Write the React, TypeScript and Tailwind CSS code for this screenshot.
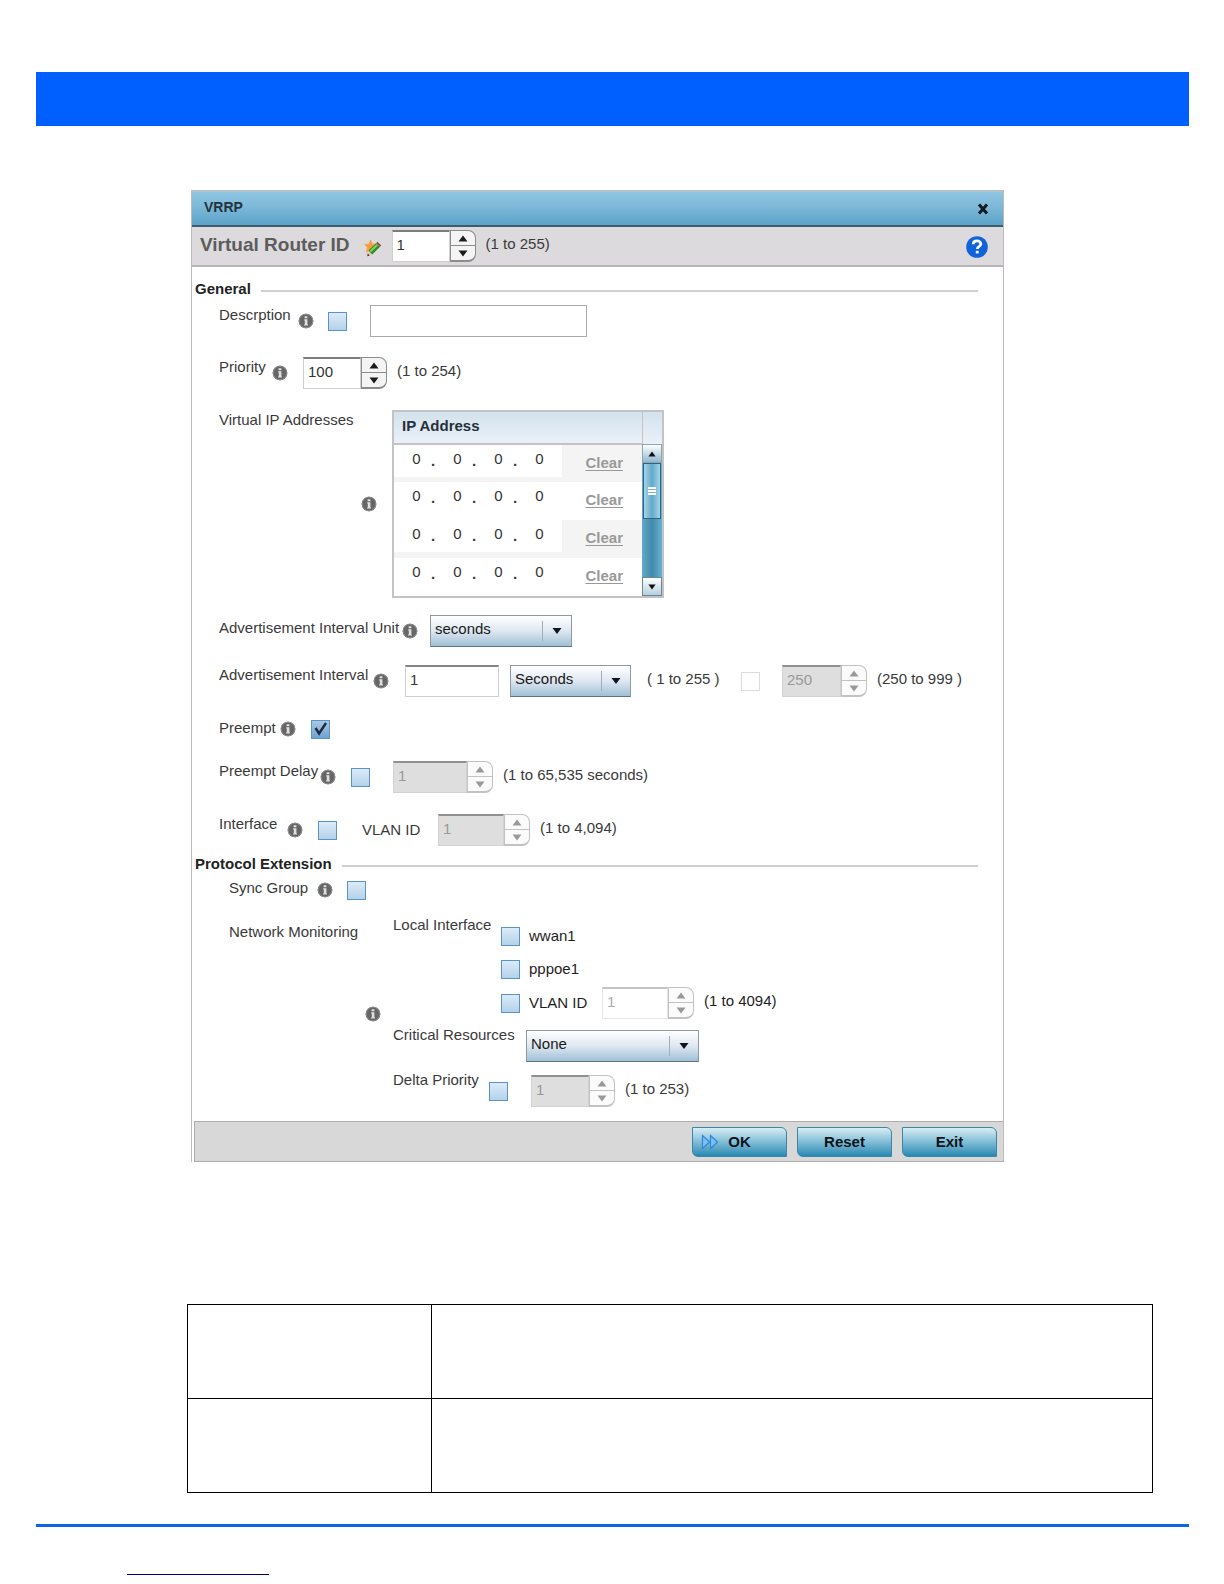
import React, { useId } from "react";

function InfoIcon() {
  return (
    <svg className="size-[16px] shrink-0" viewBox="0 0 16 16" aria-hidden="true">
      <circle cx="8" cy="8" r="7.3" fill="#666" />
      <circle cx="8" cy="8" r="6.9" fill="none" stroke="#909090" strokeWidth="1" />
      <path d="M6.6 3.2h2.8v2H6.6zM6.2 6.2h3.2v5.2h.6v1.2H6v-1.2h.8V7.4h-.6z" fill="#e0e0e0" />
    </svg>
  );
}

function EditIcon() {
  return (
    <svg className="size-[18px] shrink-0" viewBox="0 0 18 18" aria-hidden="true">
      <path
        d="M6.5 1l1.6 4.1 4.6.2-3.5 3 1 4.7-3.9-2.4-3.9 2.6 1-4.7L.6 5.4l4.4-.3z"
        fill="#f79a3a"
        stroke="#f3a858"
        strokeWidth="1"
      />
      <path d="M4.2 11.8l3.6 3.6-4.2 1.6z" fill="#e9c9a0" />
      <path d="M3.7 14.6l2 2-2.4.6z" fill="#3b2a1c" />
      <path d="M4.4 11.6L12 4.2l3.8 3.8-7.6 7.4z" fill="#2f8a28" />
      <path d="M5.6 11.8l7-6.8 1.4 1.4-7 6.8z" fill="#7fd06a" />
      <path d="M12 4.2l1.6-1.5 3.7 3.7L15.8 8z" fill="#8f5a4a" />
    </svg>
  );
}

function Triangle({ up = false, className }: { up?: boolean; className: string }) {
  return (
    <svg className={className} viewBox="0 0 10 7" aria-hidden="true">
      <path d={up ? "M5 0.5l4.5 6h-9z" : "M0.5 0.5h9L5 6.5z"} fill="currentColor" />
    </svg>
  );
}

type Look = "active" | "grey" | "faint";

function Spinner({ value, width, look = "active", label }: { value: string; width: string; look?: Look; label: string }) {
  const field =
    look === "active"
      ? "bg-white border-[#cfcfcf] border-t-[#7c7c7c] text-[#333]"
      : look === "grey"
        ? "bg-[#dedede] border-[#d2d2d2] border-t-[#909090] text-[#999]"
        : "bg-white border-[#e6e6e6] border-t-[#c4c4c4] text-[#aaa]";
  const steps =
    look === "active" ? "border-[#8c8c8c] text-[#1c1c1c] bg-[#f4f4f4]" : "border-[#c2c2c2] text-[#999] bg-[#fbfbfb]";
  const disabled = look !== "active";
  return (
    <div className="flex h-8 shrink-0">
      <input
        aria-label={label}
        defaultValue={value}
        disabled={disabled}
        className={`${width} ${field} h-8 border border-t-2 pb-1 pl-1 text-[15px] outline-none`}
      />
      <div className={`${steps} flex w-[26px] flex-col overflow-hidden rounded-r-lg border border-b-2`}>
        <button type="button" disabled={disabled} aria-label={`Increase ${label}`} className="flex flex-1 items-center justify-center border-b border-inherit">
          <Triangle up className="h-[7px] w-[10px]" />
        </button>
        <button type="button" disabled={disabled} aria-label={`Decrease ${label}`} className="flex flex-1 items-center justify-center">
          <Triangle className="h-[7px] w-[10px]" />
        </button>
      </div>
    </div>
  );
}

function Check({ id, label, checked, faint }: { id?: string; label?: string; checked?: boolean; faint?: boolean }) {
  const box = faint
    ? "border-[#dcdcdc] bg-white"
    : checked
      ? "border-[#5e93c8] bg-linear-to-b from-[#a9c8e4] to-[#6fa3d2]"
      : "border-[#5b93c9] bg-linear-to-b from-[#dcebf8] to-[#b3d2ea]";
  return (
    <span className="relative flex size-[19px] shrink-0">
      <input
        id={id}
        type="checkbox"
        aria-label={label}
        defaultChecked={checked}
        disabled={faint}
        className={`${box} peer size-[19px] appearance-none border`}
      />
      <svg className="pointer-events-none absolute inset-0 hidden size-[19px] peer-checked:block" viewBox="0 0 19 19" aria-hidden="true">
        <path d="M4.5 8l3.6 5.5L15 3" fill="none" stroke="#1d2b3c" strokeWidth="2.4" />
      </svg>
    </span>
  );
}

function Picker({ value, width, label }: { value: string; width: string; label: string }) {
  return (
    <div className={`${width} relative h-8 shrink-0`}>
      <select
        aria-label={label}
        className="h-8 w-full appearance-none border border-[#8e9aa3] border-b-[#5d7482] bg-linear-to-b from-white via-[#dfe7f1] to-[#9fc0d6] pb-1 pl-1 text-[15px] text-[#1a1a1a] outline-none"
      >
        <option>{value}</option>
      </select>
      <span className="pointer-events-none absolute inset-y-0 right-0 flex items-center">
        <span className="h-5 w-px bg-[#a0aebb]" />
        <Triangle className="mr-[10px] ml-[9px] h-[8px] w-[10px] text-[#0d1620]" />
      </span>
    </div>
  );
}

function Label({ children, width, htmlFor }: { children: React.ReactNode; width: string; htmlFor?: string }) {
  return (
    <label htmlFor={htmlFor} className={`${width} shrink-0 pb-3 whitespace-nowrap`}>
      {children}
    </label>
  );
}

function Range({ children }: { children: React.ReactNode }) {
  return <span className="ml-[10px] pb-1 whitespace-nowrap">{children}</span>;
}

function SectionHeading({ children }: { children: React.ReactNode }) {
  return (
    <div className="flex h-5 items-center gap-[10px] pr-[25px] pl-[3px]">
      <h2 className="text-[15px] font-bold text-[#222]">{children}</h2>
      <span className="mt-1 h-[2px] flex-1 bg-[#d0d0d0]" />
    </div>
  );
}

function AddressTable() {
  return (
    <div className="flex w-[272px] shrink-0 border-2 border-[#c3c3c3]">
      <table className="flex-1 border-collapse">
        <thead>
          <tr>
            <th colSpan={2} className="h-8 border-b-2 border-[#c3c3c3] bg-linear-to-b from-[#d3e2ec] to-[#eaf0fa] pb-1 pl-2 text-left text-[15px] font-bold text-[#26303a]">
              IP Address
            </th>
          </tr>
        </thead>
        <tbody>
          {[0, 1, 2, 3].map((row) => (
            <tr key={row} className="odd:bg-[#f4f4f4]">
              <td className="h-[38px] w-[168px] pb-1 align-top">
                <div className="flex h-[32px] items-center bg-white pl-[10px]">
                  {[0, 1, 2, 3].map((octet) => (
                    <React.Fragment key={octet}>
                      <input
                        aria-label={`Address ${row + 1} octet ${octet + 1}`}
                        defaultValue="0"
                        className="w-[25px] bg-transparent pb-1 text-center text-[15px] text-[#333] outline-none"
                      />
                      {octet < 3 && <span className="w-4 pl-[2px] text-[15px] font-bold">.</span>}
                    </React.Fragment>
                  ))}
                </div>
              </td>
              <td className="pr-[19px] pb-[2px] text-right">
                <a href="#clear" className="text-[15px] font-bold text-[#999] underline underline-offset-2">
                  Clear
                </a>
              </td>
            </tr>
          ))}
        </tbody>
      </table>
      <div className="flex w-[20px] flex-col">
        <div className="h-8 border-l border-[#c3c3c3] bg-linear-to-b from-[#d3e2ec] to-[#eaf0fa]" />
        <button type="button" aria-label="Scroll up" className="flex h-[19px] items-center justify-center border border-[#8fa3b0] bg-linear-to-b from-white to-[#8fb9d0] text-[#111]">
          <Triangle up className="h-[6px] w-[8px]" />
        </button>
        <div className="flex-1 bg-linear-to-r from-[#63a9c8] via-[#4189ab] to-[#69b2d2] px-px">
          <div className="flex h-[56px] flex-col items-center justify-center gap-px border border-[#2e657f] bg-linear-to-r from-[#a6d4e8] via-[#62a9cb] to-[#a6d4e8]">
            <span className="h-[2px] w-2 bg-white" />
            <span className="h-[2px] w-2 bg-white" />
            <span className="h-[2px] w-2 bg-white" />
          </div>
        </div>
        <button type="button" aria-label="Scroll down" className="flex h-[19px] items-center justify-center border border-[#6b8796] bg-linear-to-b from-white to-[#b7cfdd] text-[#111]">
          <Triangle className="h-[6px] w-[8px]" />
        </button>
      </div>
    </div>
  );
}

function FooterButton({ children, icon }: { children: string; icon?: boolean }) {
  return (
    <button
      type="button"
      className="relative h-[30px] w-[95px] rounded-tr-md rounded-bl-md border border-[#3a87a8] bg-linear-to-b from-[#d8edf4] via-[#7fbdd6] to-[#2389b3] text-[15px] font-bold text-[#0c141a]"
    >
      {icon && (
        <svg className="absolute top-[6px] left-[8px] h-[16px] w-[18px]" viewBox="0 0 18 16" aria-hidden="true">
          <path d="M1.5 1.5L8.5 8l-7 6.5zM9.5 1.5l7 6.5-7 6.5z" fill="#7fc0f4" stroke="#2d86dc" strokeWidth="1.2" />
        </svg>
      )}
      {children}
    </button>
  );
}

function VrrpDialog() {
  const id = useId();
  return (
    <section className="mt-16 mr-[185px] ml-[155px] border border-b-0 border-[#bcbcbc] text-[15px] leading-5 text-[#3a3a3a]">
      <header className="flex h-[36px] items-center justify-between border-t border-b-2 border-t-[#a9c9d8] border-b-[#3f5c6a] bg-linear-to-b from-[#8fc6e2] from-0% via-[#7cb8d8] via-45% to-[#5ba3c9] to-100% pr-[14px] pl-3">
        <h1 className="pb-[3px] text-[14px] font-bold text-[#24323c]">VRRP</h1>
        <button type="button" aria-label="Close">
          <svg className="size-[12px]" viewBox="0 0 12 12" aria-hidden="true">
            <path d="M2 1.5l8 9M10 1.5l-8 9" stroke="#111a20" strokeWidth="3" />
          </svg>
        </button>
      </header>

      <div className="flex h-[40px] items-center border-b-2 border-[#b7b5b5] bg-[#dddadd] pr-[15px] pl-2">
        <span className="pb-[2px] text-[19px] font-bold text-[#5c5c5c]">Virtual Router ID</span>
        <span className="mr-[10px] ml-[14px] pt-1">
          <EditIcon />
        </span>
        <Spinner label="Virtual Router ID" value="1" width="w-[58px]" />
        <Range>(1 to 255)</Range>
        <button type="button" aria-label="Help" className="ml-auto pt-px">
          <svg className="size-[22px]" viewBox="0 0 22 22" aria-hidden="true">
            <circle cx="11" cy="11" r="10.8" fill="#1063d8" />
            <path
              d="M7.2 8.2C7.2 5.8 8.9 4.9 11 4.9s3.9 1.2 3.9 3.1c0 2.4-3.6 2.5-3.6 5"
              fill="none"
              stroke="#fff"
              strokeWidth="2.7"
            />
            <path d="M9.8 14.8h2.9v2.6H9.8z" fill="#fff" />
          </svg>
        </button>
      </div>

      <div className="mt-3">
        <SectionHeading>General</SectionHeading>
        <div className="pl-[27px]">
          <div className="mt-[6px] flex h-8 items-center">
            <Label htmlFor={`${id}-desc`} width="w-[79px]">Descrption</Label>
            <InfoIcon />
            <span className="ml-[14px]">
              <Check label="Set description" />
            </span>
            <input id={`${id}-desc`} className="ml-[23px] h-8 w-[217px] border border-[#aaa] bg-white px-1 outline-none" />
          </div>

          <div className="mt-5 flex h-8 items-center">
            <Label width="w-[53px]">Priority</Label>
            <InfoIcon />
            <span className="ml-[15px]">
              <Spinner label="Priority" value="100" width="w-[58px]" />
            </span>
            <Range>(1 to 254)</Range>
          </div>

          <div className="mt-[21px] flex items-center">
            <span className="w-[142px] self-start whitespace-nowrap">Virtual IP Addresses</span>
            <InfoIcon />
            <span className="ml-[15px]">
              <AddressTable />
            </span>
          </div>

          <div className="mt-[17px] flex h-8 items-center">
            <label className="w-[183px] shrink-0 pb-[6px] whitespace-nowrap">Advertisement Interval Unit</label>
            <InfoIcon />
            <span className="ml-3">
              <Picker label="Advertisement Interval Unit" value="seconds" width="w-[142px]" />
            </span>
          </div>

          <div className="mt-[18px] flex h-8 items-center">
            <Label htmlFor={`${id}-adv`} width="w-[154px]">Advertisement Interval</Label>
            <InfoIcon />
            <input
              id={`${id}-adv`}
              defaultValue="1"
              className="ml-4 h-8 w-[94px] border border-t-2 border-[#cfcfcf] border-t-[#858585] bg-white pb-1 pl-1 outline-none"
            />
            <span className="ml-[11px]">
              <Picker label="Interval scale" value="Seconds" width="w-[121px]" />
            </span>
            <span className="ml-4 w-[94px] pb-1 whitespace-nowrap">( 1 to 255 )</span>
            <Check label="Use milliseconds" faint />
            <span className="ml-[22px]">
              <Spinner label="Milliseconds" value="250" width="w-[59px]" look="grey" />
            </span>
            <Range>(250 to 999 )</Range>
          </div>

          <div className="mt-4 flex h-8 items-center">
            <label htmlFor={`${id}-pre`} className="w-[61px] pb-[2px]">Preempt</label>
            <InfoIcon />
            <span className="ml-[15px]">
              <Check id={`${id}-pre`} checked />
            </span>
          </div>

          <div className="mt-4 flex h-8 items-center">
            <Label htmlFor={`${id}-delay`} width="w-[101px]">Preempt Delay</Label>
            <InfoIcon />
            <span className="ml-[15px]">
              <Check id={`${id}-delay`} />
            </span>
            <span className="ml-[23px]">
              <Spinner label="Preempt Delay" value="1" width="w-[74px]" look="grey" />
            </span>
            <Range>(1 to 65,535 seconds)</Range>
          </div>

          <div className="mt-[21px] flex h-8 items-center">
            <Label htmlFor={`${id}-if`} width="w-[68px]">Interface</Label>
            <InfoIcon />
            <span className="ml-[15px]">
              <Check id={`${id}-if`} />
            </span>
            <span className="ml-[25px] w-[76px]">VLAN ID</span>
            <Spinner label="VLAN ID" value="1" width="w-[66px]" look="grey" />
            <Range>(1 to 4,094)</Range>
          </div>
        </div>

        <div className="mt-2">
          <SectionHeading>Protocol Extension</SectionHeading>
        </div>
        <div className="pl-[37px]">
          <div className="flex h-8 items-center">
            <label htmlFor={`${id}-sync`} className="w-[88px] pb-1 whitespace-nowrap">Sync Group</label>
            <InfoIcon />
            <span className="ml-[14px]">
              <Check id={`${id}-sync`} />
            </span>
          </div>

          <div className="mt-[13px] flex">
            <span className="w-[136px] pt-[3px] whitespace-nowrap">Network Monitoring</span>
            <span className="flex items-center pt-[2px]">
              <InfoIcon />
            </span>
            <div className="ml-3">
              <div className="flex">
                <span className="w-[108px] leading-3">Local Interface</span>
                <div className="flex flex-col text-[#1e1e1e]">
                  <div className="flex h-[34px] items-center">
                    <Check id={`${id}-wwan`} />
                    <label htmlFor={`${id}-wwan`} className="ml-[9px] pb-px">wwan1</label>
                  </div>
                  <div className="flex h-[33px] items-center">
                    <Check id={`${id}-pppoe`} />
                    <label htmlFor={`${id}-pppoe`} className="ml-[9px] pb-px">pppoe1</label>
                  </div>
                  <div className="flex h-[34px] items-center">
                    <Check id={`${id}-vlan`} />
                    <label htmlFor={`${id}-vlan`} className="ml-[9px] w-[73px] pb-px">VLAN ID</label>
                    <Spinner label="Monitored VLAN ID" value="1" width="w-[66px]" look="faint" />
                    <Range>(1 to 4094)</Range>
                  </div>
                </div>
              </div>
              <div className="mt-[10px] flex h-8">
                <span className="w-[133px] leading-[10px]">Critical Resources</span>
                <Picker label="Critical Resources" value="None" width="w-[173px]" />
              </div>
              <div className="mt-[13px] flex h-8 items-center">
                <label htmlFor={`${id}-delta`} className="w-[96px] self-start leading-[10px]">Delta Priority</label>
                <Check id={`${id}-delta`} />
                <span className="ml-[23px]">
                  <Spinner label="Delta Priority" value="1" width="w-[58px]" look="grey" />
                </span>
                <Range>(1 to 253)</Range>
              </div>
            </div>
          </div>
        </div>
      </div>

      <footer className="mt-[14px] ml-[2px] flex h-[41px] items-center justify-end gap-[10px] border border-r-0 border-[#adadad] bg-[#d8d8d8] pr-[6px]">
        <FooterButton icon>OK</FooterButton>
        <FooterButton>Reset</FooterButton>
        <FooterButton>Exit</FooterButton>
      </footer>
    </section>
  );
}

export default function App() {
  return (
    <main className="bg-white pt-[72px] pr-[35px] pb-2 pl-9 font-['Liberation_Sans',Arial,sans-serif]">
      <div className="h-[54px] bg-[#0060ff]" />
      <VrrpDialog />
      <div className="mt-[142px] mr-9 ml-[151px]">
        <table className="w-full table-fixed border-collapse" aria-label="Settings">
          <tbody>
            {[0, 1].map((row) => (
              <tr key={row}>
                <td className="h-[94px] w-[244px] border border-black" />
                <td className="border border-black" />
              </tr>
            ))}
          </tbody>
        </table>
      </div>
      <div className="mt-[31px] h-[3px] bg-[#1163e6]" />
      <a href="#top" aria-label="Back to top" className="mt-7 ml-[91px] block h-[20px] w-[142px] border-b border-[#00007f]" />
    </main>
  );
}
